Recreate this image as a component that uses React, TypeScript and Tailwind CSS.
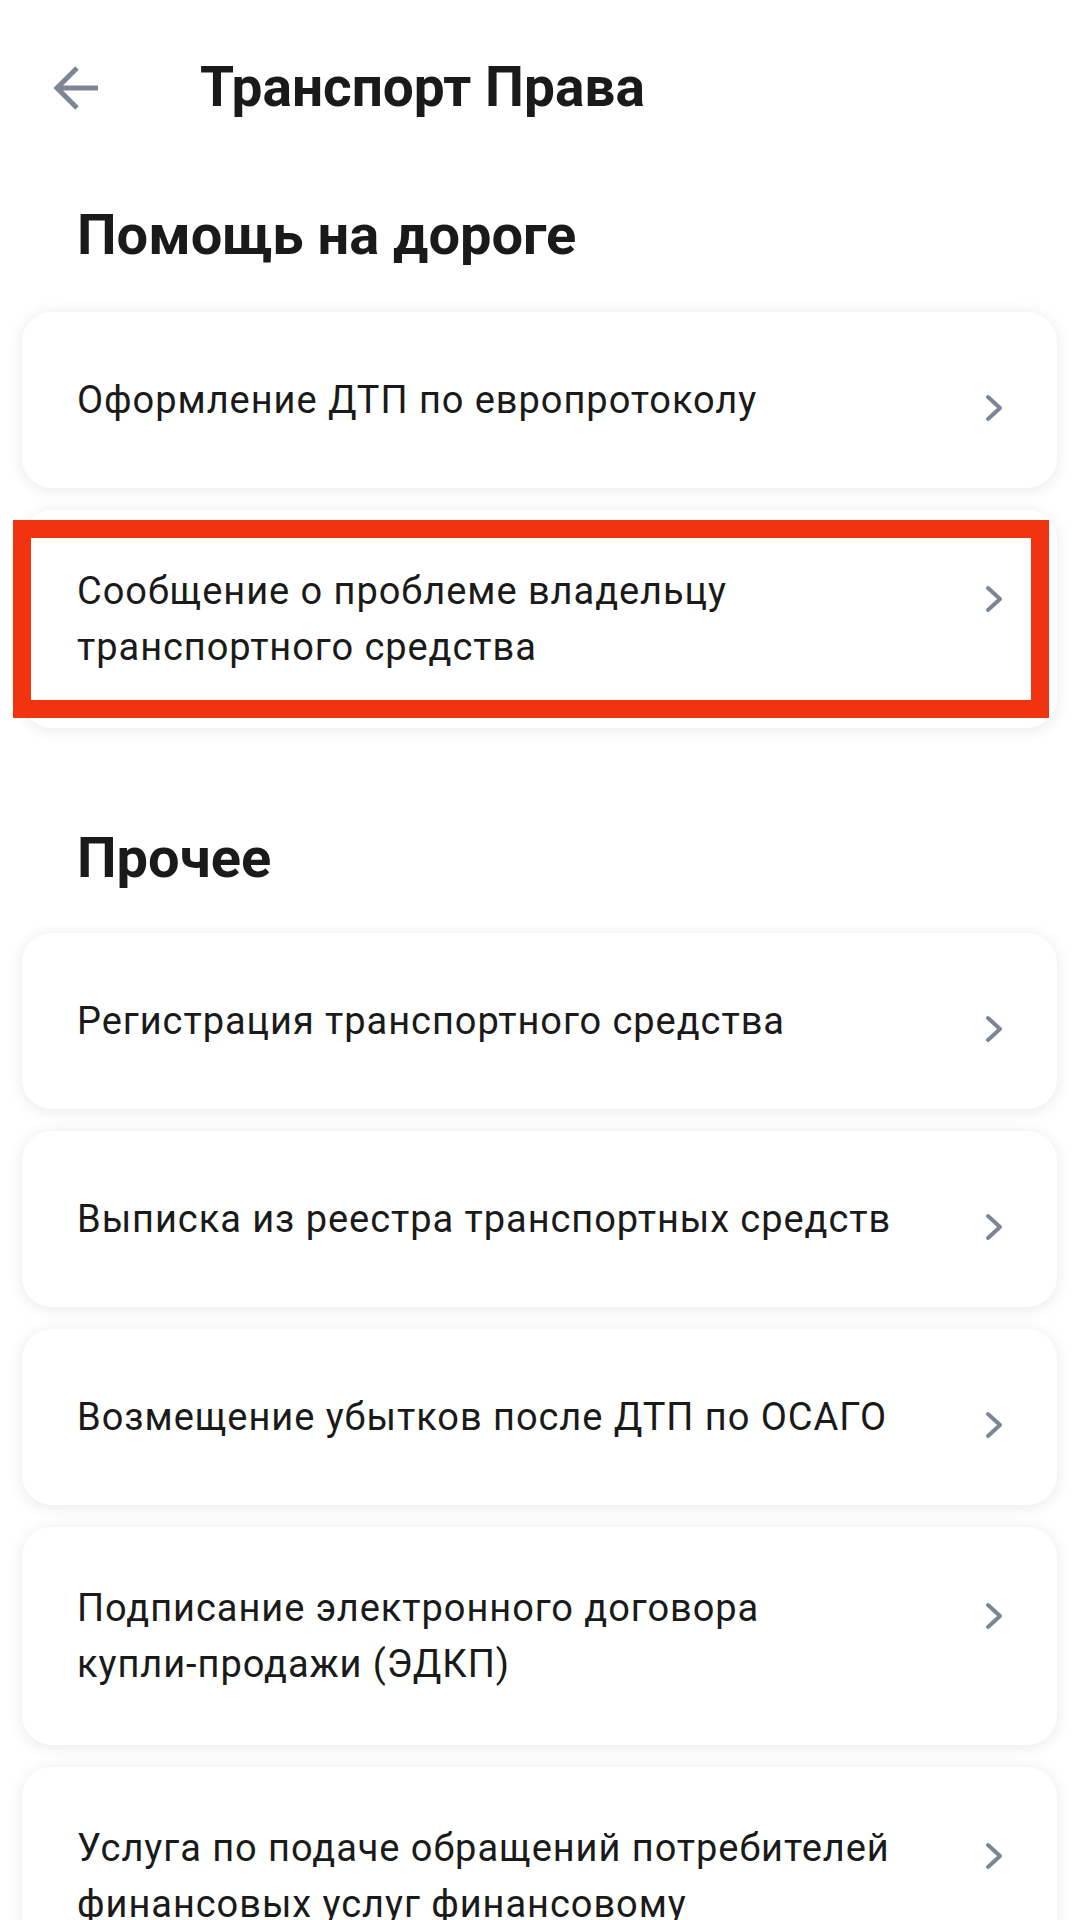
import React from 'react';

type Service = {
  title: React.ReactNode;
  key: string;
  marked?: boolean;
};

const roadHelp: Service[] = [
  { key: 'euro', title: 'Оформление ДТП по европротоколу' },
  {
    key: 'owner',
    title: 'Сообщение о проблеме владельцу транспортного средства',
    marked: true,
  },
];

const other: Service[] = [
  { key: 'reg', title: 'Регистрация транспортного средства' },
  { key: 'extract', title: 'Выписка из реестра транспортных средств' },
  { key: 'osago', title: 'Возмещение убытков после ДТП по ОСАГО' },
  {
    key: 'edkp',
    title: (
      <>
        Подписание электронного договора{' '}
        <span className="whitespace-nowrap">купли-продажи</span> (ЭДКП)
      </>
    ),
  },
  {
    key: 'finombudsman',
    title:
      'Услуга по подаче обращений потребителей финансовых услуг финансовому уполномоченному',
  },
];

const BackArrow = () => (
  <svg width="48" height="46" viewBox="0 0 48 46" fill="none">
    <path
      d="M45 23H5M24 3L4 23L24 43"
      stroke="#7d8697"
      strokeWidth="5"
      strokeLinejoin="miter"
    />
  </svg>
);

const Chevron = () => (
  <svg width="20" height="30" viewBox="0 0 20 30" fill="none">
    <path
      d="M4 4L16 15L4 26"
      stroke="#7d8697"
      strokeWidth="4"
      strokeLinecap="round"
      strokeLinejoin="round"
    />
  </svg>
);

const ServiceCard = ({ item }: { item: Service }) => (
  <div className="relative flex min-h-[176px] items-center rounded-[30px] bg-white py-[53px] pl-[55px] pr-[53px] shadow-[0_2px_16px_rgba(0,0,0,0.09)]">
    <div className="flex w-full items-start">
      <p className="flex-1 pr-[66px] text-[38px] leading-[56px] tracking-[0.025em] text-[#1a1a1a]">
        {item.title}
      </p>
      <div className="mt-[21px] shrink-0">
        <Chevron />
      </div>
    </div>
    {item.marked && (
      <div className="pointer-events-none absolute -left-[9px] right-[8px] top-[10px] bottom-[10px] border-[18px] border-[#f2330f]" />
    )}
  </div>
);

const SectionTitle = ({ children }: { children: React.ReactNode }) => (
  <h2 className="px-[77px] text-[56px] font-bold leading-[64px] text-[#1a1a1a]">
    {children}
  </h2>
);

export default function App() {
  return (
    <div
      className="min-h-[1920px] overflow-hidden bg-white"
      style={{ fontFamily: 'Roboto, "Noto Sans", sans-serif' }}
    >
      <header className="mt-[54px] flex h-[67px] items-center">
        <div className="ml-[53px]">
          <BackArrow />
        </div>
        <h1 className="ml-[99px] text-[55px] font-bold leading-[67px] text-[#1a1a1a]">
          Транспорт Права
        </h1>
      </header>

      <section className="mt-[82px]">
        <SectionTitle>Помощь на дороге</SectionTitle>
        <div className="mt-[45px] flex flex-col gap-[22px] pl-[22px] pr-[23px]">
          {roadHelp.map((item) => (
            <ServiceCard key={item.key} item={item} />
          ))}
        </div>
      </section>

      <section className="mt-[98px]">
        <SectionTitle>Прочее</SectionTitle>
        <div className="mt-[43px] flex flex-col gap-[22px] pl-[22px] pr-[23px]">
          {other.map((item) => (
            <ServiceCard key={item.key} item={item} />
          ))}
        </div>
      </section>
    </div>
  );
}
